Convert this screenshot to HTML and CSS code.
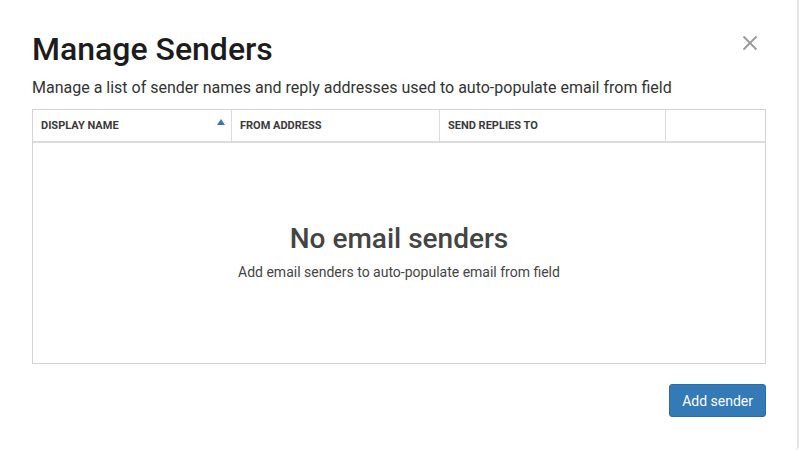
FILE: index.html
```html
<!DOCTYPE html>
<html>
<head>
<meta charset="utf-8">
<link rel="stylesheet" href="styles.css">
</head>
<body>
<div class="modal">
  <div class="modal-header">
    <h1 class="title">Manage Senders</h1>
    <button class="close" aria-label="Close">
      <svg width="16" height="16" viewBox="0 0 16 16"><path d="M1.5 1.5 L14.5 14.5 M14.5 1.5 L1.5 14.5" stroke="#999" stroke-width="1.8" fill="none"/></svg>
    </button>
  </div>
  <p class="subtitle">Manage a list of sender names and reply addresses used to auto-populate email from field</p>
  <div class="table">
    <div class="thead">
      <div class="th col1">DISPLAY NAME<span class="sort"></span></div>
      <div class="th col2">FROM ADDRESS</div>
      <div class="th col3">SEND REPLIES TO</div>
      <div class="th col4"></div>
    </div>
    <div class="tbody">
      <div class="empty-title">No email senders</div>
      <div class="empty-text">Add email senders to auto-populate email from field</div>
    </div>
  </div>
  <div class="footer">
    <button class="btn-primary">Add sender</button>
  </div>
</div>
</body>
</html>
```
FILE: styles.css
```css
html, body {
  margin: 0;
  padding: 0;
  background: #fff;
}
body {
  font-family: Roboto, "Liberation Sans", sans-serif;
  color: #333;
}
.modal {
  box-sizing: border-box;
  width: 799px;
  height: 450px;
  padding: 0 32px 0 32px;
  border-right: 2px solid #e6e6e6;
  border-radius: 0 0 4px 4px;
}
.modal-header {
  display: flex;
  justify-content: space-between;
  align-items: flex-start;
  padding-top: 27px;
}
.title {
  margin: 0;
  font-size: 32px;
  font-weight: 500;
  line-height: 44px;
  color: #1c1c1c;
}
.close {
  border: 0;
  background: none;
  padding: 0;
  margin: 8px 7px 0 0;
  width: 16px;
  height: 16px;
  cursor: pointer;
}
.close svg { display: block; }
.subtitle {
  margin: 6px 0 0 0;
  font-size: 16px;
  line-height: 22px;
  color: #333;
}
.table {
  margin-top: 10px;
  width: 734px;
  border: 1px solid #d3d3d3;
  box-sizing: border-box;
}
.thead {
  display: grid;
  grid-template-columns: 199px 208px 226px 1fr;
  height: 31px;
  border-bottom: 2px solid #dcdcdc;
}
.th {
  position: relative;
  font-size: 11px;
  font-weight: 700;
  color: #3a3a3a;
  display: flex;
  align-items: center;
  padding-left: 8px;
  border-right: 1px solid #dcdcdc;
}
.th.col4 { border-right: 0; }
.sort {
  position: absolute;
  right: 6px;
  top: 9px;
  width: 0;
  height: 0;
  border-left: 4px solid transparent;
  border-right: 4px solid transparent;
  border-bottom: 6px solid #337ab7;
}
.tbody {
  height: 220px;
  display: flex;
  flex-direction: column;
  align-items: center;
  justify-content: center;
  padding-bottom: 4px;
  box-sizing: border-box;
}
.empty-title {
  font-size: 28px;
  font-weight: 500;
  color: #444;
  line-height: 34px;
}
.empty-text {
  margin-top: 7px;
  font-size: 14px;
  color: #444;
  line-height: 18px;
}
.footer {
  display: flex;
  justify-content: flex-end;
  margin-top: 20px;
  width: 734px;
}
.btn-primary {
  font-family: Roboto, "Liberation Sans", sans-serif;
  background: #337ab7;
  color: #fff;
  border: 1px solid #2e6da4;
  border-radius: 3px;
  font-size: 14px;
  height: 33px;
  padding: 0 12px;
}
```
